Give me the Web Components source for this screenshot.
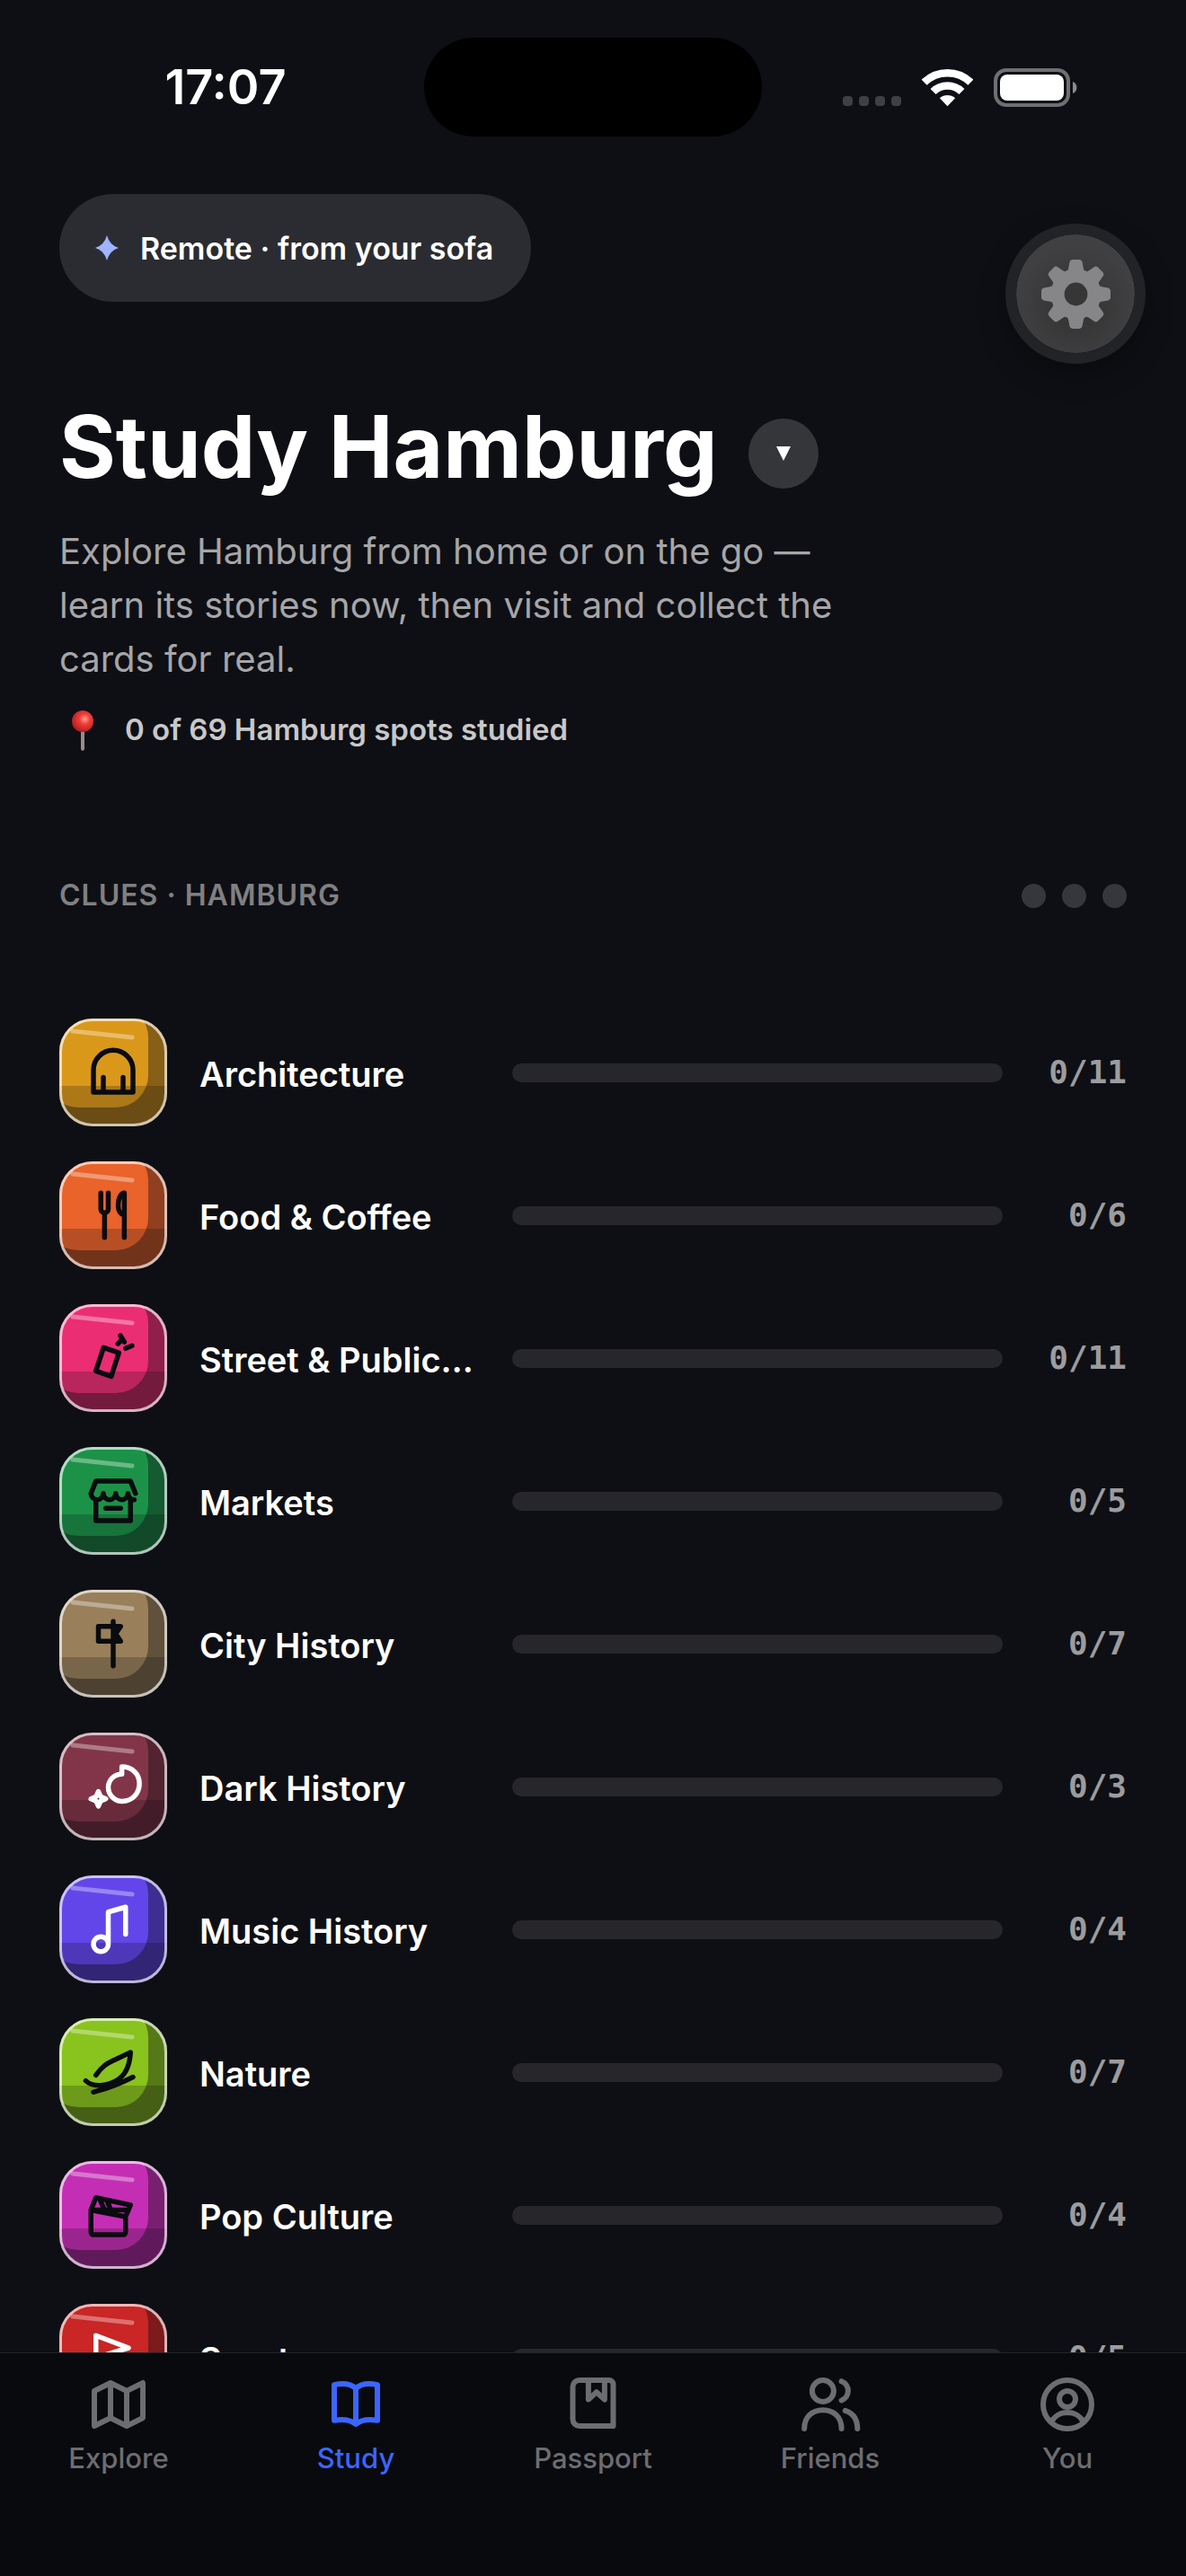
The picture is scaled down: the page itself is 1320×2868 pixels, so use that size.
<!DOCTYPE html>
<html lang="en">
<head>
<meta charset="utf-8">
<meta name="viewport" content="width=device-width, initial-scale=1">
<title>Study Hamburg</title>
<style>
	html, body {
		margin: 0;
		height: 100%;
		background: #0e0f14;
	}
	body {
		font-family: Inter, "Liberation Sans", sans-serif;
		color: #ffffff;
	}
</style>
</head>
<body>
<study-app>
	<status-bar slot="status" time="17:07"></status-bar>
	<study-header heading="Study Hamburg">
		<span slot="mode">Remote · from your sofa</span>
		<span slot="intro">Explore Hamburg from home or on the go — learn its stories now, then visit and collect the cards for real.</span>
		<span slot="progress">0 of 69 Hamburg spots studied</span>
	</study-header>
	<clue-list heading="Clues · Hamburg">
		<clue-row icon="architecture" color="#da981b" total="11">Architecture</clue-row>
		<clue-row icon="food" color="#e9632b" total="6">Food &amp; Coffee</clue-row>
		<clue-row icon="street" color="#eb2d74" total="11">Street &amp; Public Art</clue-row>
		<clue-row icon="markets" color="#1c9248" total="5">Markets</clue-row>
		<clue-row icon="city" color="#99805b" total="7">City History</clue-row>
		<clue-row icon="dark" color="#823549" ink="#ffffff" total="3">Dark History</clue-row>
		<clue-row icon="music" color="#6246ea" ink="#ffffff" total="4">Music History</clue-row>
		<clue-row icon="nature" color="#89c31e" total="7">Nature</clue-row>
		<clue-row icon="pop" color="#c42eb4" total="4">Pop Culture</clue-row>
		<clue-row icon="sport" color="#c92625" ink="#ffffff" total="5">Sport</clue-row>
	</clue-list>
	<settings-button slot="overlay"></settings-button>
	<tab-bar slot="tabs">
		<tab-item icon="map" href="#explore">Explore</tab-item>
		<tab-item icon="book" href="#study" active>Study</tab-item>
		<tab-item icon="passport" href="#passport">Passport</tab-item>
		<tab-item icon="friends" href="#friends">Friends</tab-item>
		<tab-item icon="you" href="#you">You</tab-item>
	</tab-bar>
</study-app>

<script>
(function() {
	// clue glyphs, 24x24 grid, stroke only
	const CLUE_ICONS = {
		architecture: "M4 20V11a8 8 0 0 1 16 0v9zM8 20v-6M16 20v-6",
		food: "M7 3v6.5a1.5 1.5 0 0 0 3 0V3M8.5 11v10M16.5 21V3c-1.5 0-2.5 2.3-2.5 5s1 3.5 2.5 4",
		street: "M8.1 7.8l6.2 2.1-3.1 9.5L5 17.2zM14.9 2.9l1.6 2.6M13.9 6.2l1.7-1.8M17 8.1L19.6 7",
		markets: "M5 11.5V20h14v-8.5M3 9a2.5 2.5 0 0 0 5 0a2.5 2.5 0 0 0 5 0a2.5 2.5 0 0 0 5 0a2.5 2.5 0 0 0 2.5 2.5M3 9l2-5h14l2 5M9 15h6",
		city: "M12 3v18M15 5H6v6h9l-2-3z",
		dark: "M15.5 4v3C12.3 7 10 9.5 10 12.4S12.4 18 15.7 18c4 0 6.9-3.2 6.9-7.2S19.5 4 15.5 4zM6 14l.9 2.1L9 17l-2.1.9L6 20l-.9-2.1L3 17l2.1-.9z",
		music: "M10 18V5l7-2v11M4 18a3 3 0 1 0 6 0a3 3 0 1 0-6 0",
		nature: "M5 13.2C8 9 10 8.3 12.5 7.1L19 4c-.3 5-1.5 9-5.5 11.3C9.5 17.5 4 18.5.9 15.5M4 20.1c4.5-1.3 8-2 16-6.1",
		pop: "M3 10v9a1 1 0 0 0 1 1h12a1 1 0 0 0 1-1v-6.3L3 10l2-5 14 3-2 4.7M3 10h15M6.5 5.6L8.5 10M9.5 6.3l2 4.7",
		sport: "M5 21V3l13.2 5L5 12"
	};

	const TAB_ICONS = {
		map: "M3 7l6-3 6 3 6-3v13l-6 3-6-3-6 3zM9 4v13M15 7v13",
		book: "M4 4.7c3-.7 6-.5 8 1.3 2-1.8 5-2 8-1.3v13.2c-3-.5-6-.3-8 1.4-2-1.7-5-1.9-8-1.4zM12 6v13",
		passport: "M19.5 20H7a2.5 2.5 0 0 1-2.5-2.5v-12A2.5 2.5 0 0 1 7 3h11a1.5 1.5 0 0 1 1.5 1.5zM10.3 3.5v6.7l3-2.8 3 2.8V3.5",
		friends: "M5.3 7a4 4 0 1 0 8 0a4 4 0 1 0-8 0M2.4 21c0-4.2 2.7-6.9 6.9-6.9s6.9 2.7 6.9 6.9M16.2 3.4a3.8 3.8 0 0 1 0 7.1M17.6 14.3c3 1 4.5 3.5 4.5 6.7",
		you: "M3 12a9 9 0 1 0 18 0a9 9 0 1 0-18 0M9 10a3 3 0 1 0 6 0a3 3 0 1 0-6 0M6 18.7c1-2.3 3.3-3.7 6-3.7s5 1.4 6 3.7"
	};

	class StudyApp extends HTMLElement {
		constructor() {
			super();
			this.attachShadow({mode: "open"}).innerHTML = `
				<style>
				:host {
					display: flex;
					flex-direction: column;
					height: 100vh;
					position: relative;
					overflow: hidden;
				}
				main {
					flex: 1;
					min-height: 0;
					overflow: hidden;
					padding: 30px 66px 0;
				}
				</style>
				<slot name="status"></slot>
				<main><slot></slot></main>
				<slot name="tabs"></slot>
				<slot name="overlay"></slot>
			`;
		}
	}

	class StatusBar extends HTMLElement {
		connectedCallback() {
			this.attachShadow({mode: "open"}).innerHTML = `
				<style>
				:host {
					display: grid;
					grid-template-columns: 1fr 376px 1fr;
					align-items: center;
					height: 110px;
					padding: 42px 0 34px;
				}
				.time {
					padding-left: 30px;
					text-align: center;
					font-size: 54px;
					font-weight: 600;
					line-height: 64px;
				}
				.island {
					height: 110px;
					border-radius: 55px;
					background: #000000;
				}
				.icons {
					display: flex;
					justify-content: flex-end;
					gap: 23px;
					padding-right: 121px;
				}
				svg {
					display: block;
				}
				</style>
				<div class="time">${this.getAttribute("time")}</div>
				<div class="island"></div>
				<div class="icons">
					<svg width="65" height="43" viewBox="0 0 65 43" fill="#3f4043" aria-label="No signal">
						<rect x="0" y="31" width="11" height="11" rx="4"/>
						<rect x="18" y="31" width="11" height="11" rx="4"/>
						<rect x="36" y="31" width="11" height="11" rx="4"/>
						<rect x="54" y="31" width="11" height="11" rx="4"/>
					</svg>
					<svg width="57" height="43" viewBox="-86 -127 172 129" aria-label="Wi-Fi">
						<g fill="none" stroke="#ffffff" stroke-width="26">
							<path d="M-78 -80A112 112 0 0 1 78 -80"/>
							<path d="M-48 -49A69 69 0 0 1 48 -49"/>
						</g>
						<path d="M0 0L-26 -27A40 40 0 0 1 26 -27Z" fill="#ffffff"/>
					</svg>
					<svg width="93" height="43" viewBox="0 0 93 43" aria-label="Battery">
						<rect x="2" y="2" width="81" height="39" rx="12" fill="none" stroke="#6e6f73" stroke-width="4"/>
						<rect x="7" y="7" width="71" height="29" rx="8" fill="#ffffff"/>
						<path d="M88 15a7 7 0 0 1 0 13z" fill="#8a8b8e"/>
					</svg>
				</div>
			`;
		}
	}

	class StudyHeader extends HTMLElement {
		connectedCallback() {
			this.attachShadow({mode: "open"}).innerHTML = `
				<style>
				:host {
					display: block;
				}
				button {
					border: 0;
					padding: 0;
					color: inherit;
					font: inherit;
				}
				.mode {
					display: inline-flex;
					align-items: center;
					gap: 24px;
					height: 120px;
					padding: 0 42px 0 40px;
					border-radius: 60px;
					background: #2b2c31;
					font-size: 34px;
					font-weight: 600;
				}
				.title {
					display: flex;
					align-items: flex-end;
					gap: 34px;
					margin-top: 106px;
				}
				h1 {
					margin: 0;
					font-size: 96px;
					font-weight: 700;
					line-height: 110px;
				}
				.city {
					display: grid;
					place-items: center;
					width: 78px;
					height: 78px;
					margin-bottom: 8px;
					border-radius: 50%;
					background: #353639;
				}
				p {
					max-width: 900px;
					margin: 32px 0 24px;
					font-size: 40px;
					line-height: 60px;
					color: #a6a6a8;
				}
				.progress {
					display: flex;
					align-items: center;
					gap: 22px;
					font-size: 33px;
					font-weight: 600;
					line-height: 48px;
					color: #c8c8c9;
				}
				svg {
					display: block;
				}
				</style>
				<button class="mode">
					<svg width="26" height="28" viewBox="0 0 26 28" fill="#9fb4ff" aria-hidden="true"><path d="M13 0Q16 11 26 14Q16 17 13 28Q10 17 0 14Q10 11 13 0Z"/></svg>
					<slot name="mode"></slot>
				</button>
				<div class="title">
					<h1>${this.getAttribute("heading")}</h1>
					<button class="city" aria-label="Change city">
						<svg width="16" height="16" viewBox="0 0 16 16" fill="#ffffff"><path d="M0 0H16L8 16Z"/></svg>
					</button>
				</div>
				<p><slot name="intro"></slot></p>
				<div class="progress">
					<svg width="51" height="48" viewBox="0 0 51 48" aria-hidden="true">
						<defs>
							<radialGradient id="head" cx=".6" cy=".4" r=".6">
								<stop offset="0" stop-color="#ffa08c"/>
								<stop offset=".4" stop-color="#ee3f3c"/>
								<stop offset="1" stop-color="#b81d20"/>
							</radialGradient>
						</defs>
						<path d="M24 26h4v20q-2 4-4 0z" fill="#9b8a88"/>
						<circle cx="26" cy="15" r="12" fill="url(#head)"/>
					</svg>
					<slot name="progress"></slot>
				</div>
			`;
		}
	}

	class ClueList extends HTMLElement {
		connectedCallback() {
			this.attachShadow({mode: "open"}).innerHTML = `
				<style>
				:host {
					display: block;
					margin-top: 137px;
				}
				header {
					display: flex;
					align-items: center;
					justify-content: space-between;
				}
				h2 {
					margin: 0;
					font-size: 32px;
					font-weight: 600;
					line-height: 48px;
					letter-spacing: 1px;
					text-transform: uppercase;
					color: #808082;
				}
				.dots {
					display: flex;
					gap: 18px;
				}
				.dots i {
					width: 27px;
					height: 27px;
					border-radius: 50%;
					background: #36373a;
				}
				.rows {
					display: flex;
					flex-direction: column;
					gap: 39px;
					margin-top: 113px;
				}
				</style>
				<header>
					<h2>${this.getAttribute("heading")}</h2>
					<div class="dots"><i></i><i></i><i></i></div>
				</header>
				<div class="rows" role="list"><slot></slot></div>
			`;
		}
	}

	class ClueRow extends HTMLElement {
		connectedCallback() {
			this.setAttribute("role", "listitem");
			const total = this.getAttribute("total");
			const color = this.getAttribute("color");
			const ink = this.getAttribute("ink") || "#0a0b0f";
			this.attachShadow({mode: "open"}).innerHTML = `
				<style>
				:host {
					display: grid;
					grid-template-columns: 120px 312px 1fr 102px;
					column-gap: 36px;
					align-items: center;
				}
				svg {
					display: block;
				}
				.name {
					padding-top: 4px;
					overflow: hidden;
					white-space: nowrap;
					text-overflow: ellipsis;
					font-size: 38px;
					font-weight: 600;
					line-height: 60px;
				}
				progress {
					display: block;
					appearance: none;
					width: 100%;
					height: 21px;
					border: 0;
					border-radius: 11px;
					overflow: hidden;
					background: #27272b;
				}
				progress::-webkit-progress-bar {
					background: #27272b;
				}
				progress::-webkit-progress-value {
					background: ${color};
				}
				.count {
					text-align: right;
					font-family: "DejaVu Sans Mono", monospace;
					font-size: 36px;
					font-weight: 700;
					line-height: 48px;
					color: #9c9c9e;
				}
				</style>
				<svg width="120" height="120" viewBox="0 0 120 120" aria-hidden="true">
					<defs>
						<clipPath id="tile"><rect width="120" height="120" rx="37"/></clipPath>
					</defs>
					<g clip-path="url(#tile)">
						<rect width="120" height="120" fill="${color}"/>
						<path d="M-15 -15H130V130H-15ZM21 -15A36 36 0 0 0 -15 21V63A36 36 0 0 0 21 99H63A36 36 0 0 0 99 63V21A36 36 0 0 0 63 -15Z" fill="#0a0b0f" fill-opacity=".4" fill-rule="evenodd"/>
						<rect y="75" width="120" height="45" fill="#0a0b0f" fill-opacity=".22"/>
						<path d="M15 14L81 21" stroke="#ffffff" stroke-opacity=".35" stroke-width="5" stroke-linecap="round"/>
					</g>
					<rect x="1.5" y="1.5" width="117" height="117" rx="35.5" fill="none" stroke="#ffffff" stroke-opacity=".68" stroke-width="3"/>
					<g transform="translate(27 27) scale(2.75)" fill="none" stroke="${ink}" stroke-width="2" stroke-linecap="round" stroke-linejoin="round">
						<path d="${CLUE_ICONS[this.getAttribute("icon")]}"/>
					</g>
				</svg>
				<div class="name" id="name"><slot></slot></div>
				<progress value="0" max="${total}" aria-labelledby="name"></progress>
				<div class="count">0/${total}</div>
			`;
		}
	}

	class SettingsButton extends HTMLElement {
		connectedCallback() {
			let teeth = "";
			for (let a = 0; a < 360; a += 45) {
				teeth += `<path transform="rotate(${a})" d="M-30 -74Q-26 -80 -25 -86L-21 -107Q-19 -115 -11 -115H11Q19 -115 21 -107L25 -86Q26 -80 30 -74Z"/>`;
			}
			this.attachShadow({mode: "open"}).innerHTML = `
				<style>
				/* floats over the page content */
				:host {
					display: block;
					position: absolute;
					top: 249px;
					right: 45px;
				}
				button {
					display: grid;
					place-items: center;
					box-sizing: border-box;
					width: 156px;
					height: 156px;
					padding: 0;
					border: 12px solid #222327;
					border-radius: 50%;
					background: radial-gradient(circle at 50% 60%, #363637 20%, #404042 65%) padding-box;
					box-shadow: 0 12px 32px rgba(0, 0, 0, .3);
				}
				</style>
				<button aria-label="Settings">
					<svg width="77" height="77" viewBox="-115 -115 230 230" fill="#868688">
						<circle r="61" fill="none" stroke="#868688" stroke-width="45"/>
						${teeth}
					</svg>
				</button>
			`;
		}
	}

	class TabBar extends HTMLElement {
		constructor() {
			super();
			this.attachShadow({mode: "open"}).innerHTML = `
				<style>
				:host {
					display: block;
					border-top: 1px solid #222327;
					background: #090a0e;
				}
				nav {
					display: flex;
					padding: 21px 0 113px;
				}
				</style>
				<nav><slot></slot></nav>
			`;
		}
	}

	class TabItem extends HTMLElement {
		connectedCallback() {
			this.attachShadow({mode: "open"}).innerHTML = `
				<style>
				:host {
					display: block;
					flex: 1;
					color: #6c6d70;
				}
				:host([active]) {
					color: #3a66ff;
				}
				a {
					display: flex;
					flex-direction: column;
					align-items: center;
					gap: 6px;
					color: inherit;
					text-decoration: none;
					font-size: 31px;
					font-weight: 500;
					line-height: 36px;
				}
				</style>
				<a href="${this.getAttribute("href")}">
					<svg width="72" height="72" viewBox="0 0 24 24" fill="none" stroke="currentColor" stroke-width="2" stroke-linecap="round" stroke-linejoin="round" aria-hidden="true">
						<path d="${TAB_ICONS[this.getAttribute("icon")]}"/>
					</svg>
					<slot></slot>
				</a>
			`;
		}
	}

	customElements.define("study-app", StudyApp);
	customElements.define("status-bar", StatusBar);
	customElements.define("study-header", StudyHeader);
	customElements.define("clue-list", ClueList);
	customElements.define("clue-row", ClueRow);
	customElements.define("settings-button", SettingsButton);
	customElements.define("tab-bar", TabBar);
	customElements.define("tab-item", TabItem);
})();
</script>
</body>
</html>
